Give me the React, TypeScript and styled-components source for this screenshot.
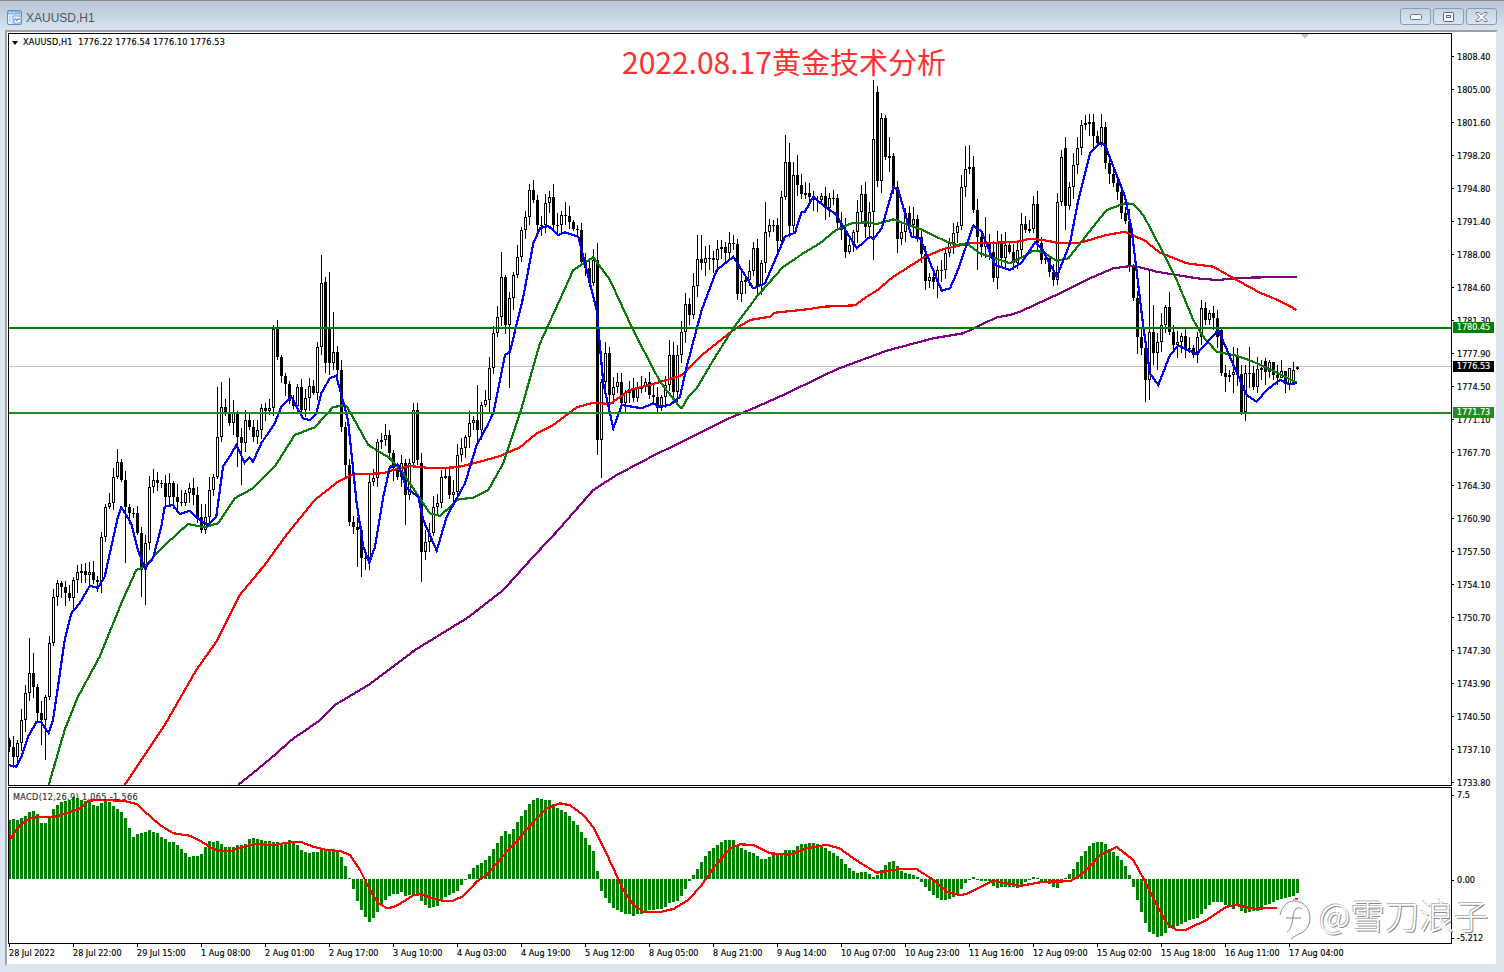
import React from 'react';
import styled, { createGlobalStyle } from 'styled-components';

const GlobalStyle = createGlobalStyle`
  html, body {
    margin: 0;
    padding: 0;
    background: #dce6f1;
  }
`;

const axisFont = `font-family: 'DejaVu Sans', 'Liberation Sans', sans-serif; font-stretch: condensed; font-size: 9px; -webkit-text-stroke: 0.15px currentColor;`;

const closes = [
  747,757,743,720,693,673,687,713,720,697,643,597,583,587,593,598,580,572,571,575,572,580,582,537,507,503,477,462,480,507,
  513,513,533,570,543,487,480,483,483,497,483,497,502,503,493,488,495,517,530,517,490,477,437,407,413,423,413,437,443,420,
  427,437,430,408,411,408,329,357,376,384,401,406,387,410,398,386,393,347,283,363,363,352,370,427,465,522,527,530,558,558,
  482,478,442,440,435,453,468,477,463,495,463,410,460,552,542,533,507,503,477,476,495,492,455,448,437,423,420,430,405,400,
  368,333,317,277,325,298,275,257,230,217,190,200,225,225,203,197,225,225,215,216,222,229,230,262,268,283,260,440,382,353,
  395,387,382,403,393,389,398,388,387,382,395,397,408,397,385,355,392,355,332,304,315,286,259,263,258,258,260,249,247,253,
  243,244,294,281,280,271,248,286,263,232,225,225,241,197,162,226,175,185,194,193,197,200,200,196,208,198,198,223,230,252,
  245,232,212,194,227,212,139,181,118,157,156,187,239,232,213,225,219,237,254,281,277,282,270,270,253,243,233,226,187,169,
  167,210,237,247,242,252,278,242,258,245,252,263,250,224,230,229,204,243,260,258,272,280,202,157,206,187,165,148,125,123,
  122,136,143,127,163,174,183,192,213,221,267,298,337,348,380,332,353,342,325,307,332,345,342,336,348,348,355,337,308,320,
  313,318,337,373,377,375,372,374,412,373,373,387,369,368,372,362,375,378,371,384,368,370,367,
];

// body tops that don't start at the previous close
const opens: Record<number, number> = {
  325: 282, 329: 328, 333: 363, 421: 463, 877: 92, 1065: 148, 1221: 330, 1237: 357, 1265: 361, 1293: 383, 1297: 369,
};

const wicks: Record<number, [number?, number?]> = {
  29: [638], 33: [653], 41: [, 745], 45: [, 760], 117: [449], 125: [, 563], 141: [, 597], 145: [, 605],
  217: [387], 221: [382], 229: [378], 237: [, 467], 241: [, 485], 321: [255], 325: [277], 329: [272], 333: [312], 337: [346],
  341: [360], 357: [, 567], 361: [, 577], 365: [, 570], 369: [, 570], 385: [424], 405: [, 525], 413: [403], 417: [403],
  421: [, 582], 425: [, 560], 477: [385], 501: [252], 509: [, 388], 593: [249], 597: [243, 455], 601: [, 478], 605: [342],
  669: [340], 697: [235], 701: [235], 737: [, 300], 741: [, 302], 765: [202], 785: [135], 789: [143], 797: [155],
  861: [185], 865: [182], 873: [80, 260], 877: [86, 187], 881: [113], 885: [115], 889: [137, 172], 893: [153], 897: [, 253],
  929: [, 288], 933: [, 289], 937: [, 298], 965: [146], 969: [145], 973: [156], 977: [, 270], 985: [217],
  1057: [193], 1061: [150], 1065: [, 230], 1073: [153], 1081: [120], 1085: [115], 1089: [114], 1105: [122],
  1137: [, 354], 1145: [, 402], 1149: [270, 400], 1153: [305], 1157: [, 370], 1165: [305], 1169: [292], 1197: [, 363],
  1205: [302], 1225: [, 392], 1229: [370, 382], 1233: [347, 393], 1241: [, 415], 1249: [347, 388], 1253: [, 390],
  1261: [360, 380], 1265: [358, 385], 1269: [360, 378], 1273: [362, 380], 1277: [365, 385], 1281: [360, 378],
  1285: [372, 393], 1289: [368, 390], 1293: [362, 384], 1297: [366, 370],
};

let seed = 17;
const rnd = () => {
  seed = (seed * 16807) % 2147483647;
  return seed / 2147483647;
};

const candles = closes.map((close, i) => {
  const x = 9 + i * 4;
  const open = opens[x] ?? (i ? closes[i - 1] : 740);
  const top = Math.min(open, close);
  const bottom = Math.max(open, close);
  const [hi, lo] = wicks[x] ?? [];
  return {
    x,
    top,
    bottom,
    up: close < open,
    high: hi ?? Math.round(top - 2 - rnd() * 11),
    low: lo ?? Math.round(bottom + 2 + rnd() * 11),
  };
});

// traces were read off 3x crops, so every run carries its crop origin
type Run = [number, number, number[]];

const toLine = (runs: Run[]) => {
  let lastX = -1;
  const out: string[] = [];
  runs.forEach(([ox, oy, pts]) => {
    for (let i = 0; i < pts.length; i += 2) {
      const x = ox + pts[i] / 3;
      if (x <= lastX) continue;
      lastX = x;
      out.push(`${x.toFixed(1)},${(oy + pts[i + 1] / 3).toFixed(1)}`);
    }
  });
  return out.join(' ');
};

const blueLine = toLine([
  [8, 320, [0,1335,25,1340,40,1310,60,1250,85,1207,100,1207,122,1240,135,1200,150,1100,170,960,190,880,215,850,245,798,270,803,290,770,310,680,330,590,340,562,370,610,390,690,410,745,435,715,460,620,470,560,495,555,515,582,545,572,575,600,600,615,625,590,645,440,665,410,685,375,710,428,725,412,735,425,760,370,800,310,820,260,850,230,885,295,905,300,925,280,940,220,965,175,985,167,1020,300]],
  [340, 170, [0,640,25,760,50,1000,70,1130,88,1178,105,1130,130,980,150,890,175,885,200,955,235,980,250,1050,290,1142,320,1040,375,940,410,825,440,770,460,730,495,555,510,545,550,380,580,220,600,175,625,168,655,195,675,187,715,200,770,420,790,640,820,775,845,705,905,715,940,700,955,710,990,705,1020,680]],
  [670, 80, [20,970,50,860,95,690,140,570,190,530,250,625,285,610,345,470,375,458,395,395,405,395,430,350,470,385,495,400,560,505,600,470,610,478,635,445,670,322,685,330,725,470,750,475,815,632,840,625,860,580,910,437,935,455,975,555,1020,570]],
  [1000, 100, [25,510,65,488,105,427,125,445,170,530,210,430,235,300,270,160,300,130,315,135,375,290,395,390,430,680,450,820,475,855,510,765,535,737,590,762,655,690,720,840,740,885,770,905,800,870,840,840,865,852,890,850]],
]);

const greenLine = toLine([
  [8, 320, [122,1395,170,1230,210,1130,275,1010,340,850,385,750,410,740,460,685,540,612,590,622,630,610,680,535,735,505,800,440,860,345,920,322,975,262,1010,255,1020,265]],
  [340, 170, [35,735,85,825,150,865,190,910,240,985,270,1030,300,1038,355,988,400,983,445,960,490,880,540,730,600,520,650,410,700,300,760,262,810,330,870,460,900,520,960,635,1020,712]],
  [670, 80, [35,985,55,950,80,925,130,840,190,745,260,650,340,560,400,520,450,490,495,452,545,430,590,427,620,432,670,418,720,437,750,447,830,485,860,495,890,490,930,520,990,540,1020,550]],
  [1000, 100, [30,490,70,470,100,452,125,455,170,482,205,475,260,405,320,330,375,310,400,312,430,345,480,440,530,540,580,660,610,710,650,755,710,767,760,785,830,818,890,848]],
]);

const redLine = toLine([
  [8, 320, [350,1395,410,1305,470,1215,565,1050,625,965,695,825,770,735,835,645,920,540,990,485,1020,470]],
  [340, 170, [40,913,130,910,160,900,210,888,280,895,350,892,420,875,480,858,540,832,590,790,640,765,710,712,760,698,810,702,870,660,940,642,1020,618]],
  [670, 80, [35,885,90,830,190,750,240,720,300,710,315,698,420,687,460,680,555,676,590,650,620,632,670,590,760,533,820,507,900,490,1020,487]],
  [1000, 100, [30,426,60,424,90,416,130,420,180,430,240,428,320,405,375,395,435,422,480,458,560,490,640,500,710,540,780,578,840,603,890,630]],
]);

const purpleLine = toLine([
  [8, 320, [690,1395,740,1355,800,1305,850,1260,930,1205,980,1155,1020,1132]],
  [340, 170, [90,1542,225,1440,385,1342,490,1260,580,1160,650,1085,760,960,830,915,940,857,1020,818]],
  [670, 80, [170,1018,250,985,340,945,500,868,650,812,790,775,880,760,980,712,1020,705]],
  [1000, 100, [30,642,60,635,110,612,190,575,270,535,340,505,400,497,470,515,590,535,650,540,740,533,890,530]],
]);

const signalLine = toLine([
  [0, 770, [28,210,60,165,90,145,120,140,165,140,210,127,240,115,265,92,300,90,370,92,410,102,440,130,480,165,520,190,570,197,600,212,640,237,660,242,695,242,720,233,765,222,820,226,860,218,900,215]],
  [290, 790, [30,156,70,170,110,180,150,183,180,195,210,240,240,300,265,340,290,354,310,352,340,335,370,315,390,312,430,325,460,333,490,332,520,318,560,275,590,255,620,220,650,185,680,155,710,118,740,85,770,55,810,40,840,46,880,75,910,112,940,170,970,235,1000,300,1030,345,1060,365,1110,366,1150,357,1195,330,1235,285,1270,235,1320,175,1350,163,1390,165,1440,190,1500,194]],
  [790, 790, [50,175,110,164,150,176,200,212,260,248,330,237,380,237,430,270,470,305,510,315,530,312,610,272,690,288,760,275,840,274,880,250,930,195,980,171,1030,210,1060,265,1100,345,1130,400,1160,420,1185,420,1250,390,1310,350,1340,345,1390,356,1460,354]],
]);

// the watermark's halo hides the stretch before this
const signalTail = toLine([[790, 790, [1508,330,1525,327]]]);

// histogram tops as read on the 3x crop; zero sits at 267 there
const histTops = [
  ...[59,60,59,61,63,67,68,65,56,56,62,70,74,77,78,79,82,81,79,78,77,74,73,76,78,77,73,70,67,61,51,42,45,46,47,49,47,46,42,40,37,37,34,30,26,22,23,23,25,32,38,37,38,35,32,32,32,34,34,35,40,41,40,39,38,38,37,37,36,36].map((h) => 267 - h * 3),
  150,160,165,180,186,189,186,186,176,178,176,178,186,201,228,264,
  297,333,360,381,396,384,366,345,330,318,312,312,306,318,315,312,318,333,345,354,350,348,333,321,315,309,303,285,269,
  252,234,225,219,210,198,177,159,138,123,132,117,96,78,60,42,30,24,27,30,30,42,54,60,66,78,93,105,126,144,165,183,243,
  303,324,339,354,360,366,372,372,378,372,372,362,360,360,357,357,351,339,336,333,318,297,273,
  255,237,216,198,183,174,165,156,150,150,150,165,174,180,186,189,198,207,207,201,192,189,189,180,180,
  180,168,162,162,159,159,162,168,174,183,189,198,207,222,234,243,249,246,246,252,261,255,240,225,216,213,228,243,249,252,255,261,
  276,291,303,315,324,330,330,327,321,312,297,279,268,261,267,273,273,273,288,294,291,291,291,291,294,291,276,270,261,264,273,276,282,291,294,270,264,
  252,237,216,198,183,168,159,156,156,162,177,186,198,210,228,255,
  291,330,366,399,426,432,441,438,429,414,417,408,402,396,390,387,384,372,357,345,336,336,336,345,351,357,348,363,369,366,363,363,351,345,342,336,330,327,324,321,318,309,
];

const priceLabels = [
  '1808.40','1805.00','1801.60','1798.20','1794.80','1791.40','1788.00','1784.60','1781.30','1777.90','1774.50','1771.10',
  '1767.70','1764.30','1760.90','1757.50','1754.10','1750.70','1747.30','1743.90','1740.50','1737.10','1733.80',
];

const timeLabels = [
  '28 Jul 2022','28 Jul 22:00','29 Jul 15:00','1 Aug 08:00','2 Aug 01:00','2 Aug 17:00','3 Aug 10:00','4 Aug 03:00',
  '4 Aug 19:00','5 Aug 12:00','8 Aug 05:00','8 Aug 21:00','9 Aug 14:00','10 Aug 07:00','10 Aug 23:00','11 Aug 16:00',
  '12 Aug 09:00','15 Aug 02:00','15 Aug 18:00','16 Aug 11:00','17 Aug 04:00',
];

const macdLabels = [
  { text: '7.5', gap: 1 },
  { text: '0.00', gap: 73 },
  { text: '-5.212', gap: 46 },
];

const priceTags = [
  { text: '1780.45', y: 322, bg: '#008000' },
  { text: '1776.53', y: 361, bg: '#000000' },
  { text: '1771.73', y: 407, bg: '#228b22' },
];

function WindowIcon() {
  return (
    <svg width="15" height="15" viewBox="0 0 15 15">
      <rect x="0.5" y="0.5" width="14" height="14" rx="1.5" fill="#e8f1fb" stroke="#5b8fd0" />
      <rect x="1" y="1" width="13" height="3.5" fill="#8fb6e6" />
      <rect x="3" y="2" width="1" height="1" fill="#fff" />
      <rect x="6" y="2" width="1" height="1" fill="#fff" />
      <rect x="6" y="6" width="8" height="7" fill="#fff" stroke="#6d9ad4" />
      <path d="M7 11l1.500-3 1.500 3 1.500-3 1 2" fill="none" stroke="#4a7fc4" />
      <path d="M2 7h2M2 9h2M2 11h2" stroke="#8fb6e6" />
    </svg>
  );
}

function MinimizeGlyph() {
  return (
    <svg width="12" height="6" viewBox="0 0 12 6">
      <rect x="0.5" y="0.5" width="11" height="5" rx="1" fill="#f4f7fb" stroke="#6f7680" />
    </svg>
  );
}

function RestoreGlyph() {
  return (
    <svg width="11" height="10" viewBox="0 0 11 10">
      <rect x="0.5" y="0.5" width="10" height="9" rx="1" fill="#f4f7fb" stroke="#5e656e" />
      <rect x="3" y="3" width="5" height="3" fill="#5e656e" />
      <rect x="4" y="4" width="3" height="1" fill="#f4f7fb" />
    </svg>
  );
}

function CloseGlyph() {
  return (
    <svg width="13" height="10" viewBox="0 0 13 10">
      <path
        d="M1 0.500h3l2.500 2.500 2.500-2.500h3v1l-3.500 3.500 3.500 3.500v1h-3l-2.500-2.500-2.500 2.500h-3v-1l3.500-3.500-3.500-3.500z"
        fill="#f4f7fb"
        stroke="#6f7680"
      />
    </svg>
  );
}

function PriceChart() {
  return (
    <PlotSvg width="1442" height="751" viewBox="9 34 1442 751">
      <line x1="9" x2="1451" y1="366.5" y2="366.5" stroke="#c0c0c0" />
      {candles.map((c) => (
        <g key={c.x}>
          <rect x={c.x} y={c.high} width="1" height={c.low - c.high} fill="#000" />
          {c.up ? (
            <rect x={c.x - 0.5} y={c.top + 0.5} width="2" height={Math.max(c.bottom - c.top - 1, 1)} fill="#fff" stroke="#000" />
          ) : (
            <rect x={c.x - 1} y={c.top} width="3" height={Math.max(c.bottom - c.top, 1)} fill="#000" />
          )}
        </g>
      ))}
      <polyline points={purpleLine} fill="none" stroke="#800080" strokeWidth="2.2" />
      <polyline points={redLine} fill="none" stroke="#ff0000" strokeWidth="2.2" />
      <polyline points={greenLine} fill="none" stroke="#087c08" strokeWidth="2.2" />
      <polyline points={blueLine} fill="none" stroke="#0000ff" strokeWidth="2.2" />
      <rect x="9" y="327" width="1442" height="2" fill="#008000" />
      <rect x="9" y="412" width="1442" height="2" fill="#228b22" />
    </PlotSvg>
  );
}

function MacdChart() {
  return (
    <PlotSvg width="1442" height="155" viewBox="9 788 1442 155">
      {histTops.map((t, i) => {
        const y = Math.round(790 + t / 3);
        const x = 8 + i * 4;
        return y < 879 ? (
          <rect key={i} x={x} y={y} width="3" height={879 - y} fill="#008000" />
        ) : (
          <rect key={i} x={x} y="879" width="3" height={Math.max(y - 879, 1)} fill="#008000" />
        );
      })}
      <polyline points={signalLine} fill="none" stroke="#ff0000" strokeWidth="2.2" />
      <polyline points={signalTail} fill="none" stroke="#ff0000" strokeWidth="2" />
    </PlotSvg>
  );
}

function BubbleLogo() {
  return (
    <svg width="34" height="42" viewBox="0 0 34 42">
      <g fill="none" stroke="#fff" strokeWidth="3">
        <path d="M15 2C25 2 31 10 31 19c0 8-5 14-11 16-3 1-5 3-8 5" />
        <path d="M15 2C8 2 3 8 1 16" />
        <path d="M23 10c-5-3-8 0-9 8-1 7-2 13-6 15M7 19h15" />
      </g>
      <g fill="none" stroke="#8a8a8a" strokeWidth="1">
        <path d="M15 2C25 2 31 10 31 19c0 8-5 14-11 16-3 1-5 3-8 5" />
        <path d="M15 2C8 2 3 8 1 16" />
        <path d="M23 10c-5-3-8 0-9 8-1 7-2 13-6 15M7 19h15" />
      </g>
    </svg>
  );
}

export default function App() {
  return (
    <Page>
      <GlobalStyle />
      <TitleBar>
        <WindowIcon />
        <WindowName>XAUUSD,H1</WindowName>
        <WindowButtons>
          <WindowButton>
            <MinimizeGlyph />
          </WindowButton>
          <WindowButton>
            <RestoreGlyph />
          </WindowButton>
          <WindowButton>
            <CloseGlyph />
          </WindowButton>
        </WindowButtons>
      </TitleBar>
      <ClientFrame>
        <ChartGrid>
          <Plot>
            <PriceChart />
            <Legend>
              <LegendArrow />
              XAUUSD,H1&nbsp;&nbsp;1776.22 1776.54 1776.10 1776.53
            </Legend>
            <ChartTitle>
              2022.08.17<TitleCjk>黄金技术分析</TitleCjk>
            </ChartTitle>
            <ShiftMark />
          </Plot>
          <PriceAxis>
            {priceLabels.map((label) => (
              <AxisRow key={label}>{label}</AxisRow>
            ))}
            {priceTags.map((tag) => (
              <PriceTag key={tag.text} $y={tag.y} $bg={tag.bg}>
                {tag.text}
              </PriceTag>
            ))}
          </PriceAxis>
          <MacdPlot>
            <MacdChart />
            <MacdLegend>MACD(12,26,9) 1.065 -1.566</MacdLegend>
          </MacdPlot>
          <MacdAxis>
            {macdLabels.map((label) => (
              <MacdRow key={label.text} $gap={label.gap}>
                {label.text}
              </MacdRow>
            ))}
          </MacdAxis>
          <TimeAxis>
            {timeLabels.map((label) => (
              <TimeCell key={label}>{label}</TimeCell>
            ))}
          </TimeAxis>
        </ChartGrid>
      </ClientFrame>
      <Watermark>
        <BubbleLogo />
        <WatermarkText>@雪刀浪子</WatermarkText>
      </Watermark>
    </Page>
  );
}

const Page = styled.div`
  position: relative;
  width: 1504px;
  height: 972px;
  overflow: hidden;
  display: flex;
  flex-direction: column;
  background: #dce6f1;
`;

const TitleBar = styled.div`
  box-sizing: border-box;
  height: 30px;
  padding: 4px 7px 0 7px;
  display: flex;
  align-items: center;
  gap: 4px;
  border-top: 1px solid #8a8a8a;
  background: linear-gradient(180deg, #b9c8d7 0%, #c4d2e0 45%, #d9e5f1 100%);
`;

const WindowName = styled.span`
  font-family: 'Liberation Sans', sans-serif;
  font-size: 12px;
  color: #4e5660;
`;

const WindowButtons = styled.div`
  margin-left: auto;
  display: flex;
  gap: 2px;
`;

const WindowButton = styled.div`
  box-sizing: border-box;
  width: 31px;
  height: 17px;
  display: flex;
  align-items: center;
  justify-content: center;
  border: 1px solid #8b9bb0;
  border-radius: 3px;
  background: linear-gradient(180deg, #c6d3e1 0%, #dbe5f0 100%);
  margin-top: -2px;
`;

const ClientFrame = styled.div`
  box-sizing: border-box;
  width: 1493px;
  height: 936px;
  margin-left: 5px;
  padding: 1px 0 0 1px;
  background: #fff;
  border-top: 2px solid #a0a0a0;
  border-left: 2px solid #a0a0a0;
  border-right: 2px solid #e6e6e6;
  border-bottom: 2px solid #e0e0e0;
`;

const ChartGrid = styled.div`
  display: grid;
  grid-template-columns: 1444px 44px;
  grid-template-rows: 753px 157px 20px;
  row-gap: 0;
`;

const Plot = styled.div`
  position: relative;
  box-sizing: border-box;
  height: 753px;
  border: 1px solid #000;
`;

const PlotSvg = styled.svg`
  display: block;
  shape-rendering: crispEdges;
`;

const Legend = styled.div`
  position: absolute;
  left: 3px;
  top: 3px;
  display: flex;
  align-items: center;
  white-space: pre;
  color: #000;
  line-height: 11px;
  ${axisFont}
  letter-spacing: 0.17px;
`;

const LegendArrow = styled.span`
  width: 0;
  height: 0;
  margin-right: 5px;
  border-left: 3px solid transparent;
  border-right: 3px solid transparent;
  border-top: 4px solid #000;
`;

const ChartTitle = styled.div`
  position: absolute;
  left: 613px;
  top: 6px;
  font-family: 'Noto Sans CJK SC', 'Noto Sans', sans-serif;
  font-size: 30px;
  line-height: 42px;
  color: #ff3030;
  white-space: nowrap;
`;

const TitleCjk = styled.span`
  font-size: 29px;
`;

const ShiftMark = styled.span`
  position: absolute;
  left: 1292px;
  top: 0;
  width: 0;
  height: 0;
  border-left: 4px solid transparent;
  border-right: 4px solid transparent;
  border-top: 5px solid #c0c0c0;
`;

const PriceAxis = styled.div`
  position: relative;
  box-sizing: border-box;
  height: 753px;
  padding-top: 7px;
`;

const AxisRow = styled.div`
  display: flex;
  align-items: center;
  height: 33px;
  color: #000;
  ${axisFont}

  &::before {
    content: '';
    width: 2px;
    height: 1px;
    margin-right: 3px;
    background: #000;
  }
`;

const PriceTag = styled.div<{ $y: number; $bg: string }>`
  position: absolute;
  left: 1px;
  top: ${(p) => p.$y - 33}px;
  width: 41px;
  height: 11px;
  line-height: 11px;
  text-align: center;
  color: #fff;
  background: ${(p) => p.$bg};
  ${axisFont}
`;

const MacdPlot = styled(Plot)`
  height: 157px;
  margin-top: 1px;
`;

const MacdLegend = styled.div`
  position: absolute;
  left: 4px;
  top: 4px;
  line-height: 11px;
  color: #2b3540;
  white-space: nowrap;
  ${axisFont}
  letter-spacing: 0.35px;
`;

const MacdAxis = styled.div`
  padding-top: 2px;
`;

const MacdRow = styled(AxisRow)<{ $gap: number }>`
  height: 12px;
  margin-top: ${(p) => p.$gap}px;
`;

const TimeAxis = styled.div`
  grid-column: 1 / -1;
  display: flex;
  padding: 1px 0 0 1px;
`;

const TimeCell = styled.div`
  position: relative;
  flex: 0 0 64px;
  box-sizing: border-box;
  padding-top: 3px;
  line-height: 12px;
  color: #000;
  white-space: nowrap;
  ${axisFont}

  &::before {
    content: '';
    position: absolute;
    left: 0;
    top: -1px;
    width: 1px;
    height: 4px;
    background: #000;
  }
`;

const Watermark = styled.div`
  position: absolute;
  left: 1279px;
  top: 899px;
  display: flex;
  align-items: flex-start;
  gap: 6px;
`;

const WatermarkText = styled.span`
  font-family: 'Noto Sans CJK SC', 'Noto Sans', sans-serif;
  font-weight: 300;
  font-size: 34.500px;
  line-height: 31px;
  color: #fff;
  white-space: nowrap;
  text-shadow: 1px 1px 0 #8a8a8a, -1px -1px 0 #b8b8b8, 0 0 2px #fff;
`;
